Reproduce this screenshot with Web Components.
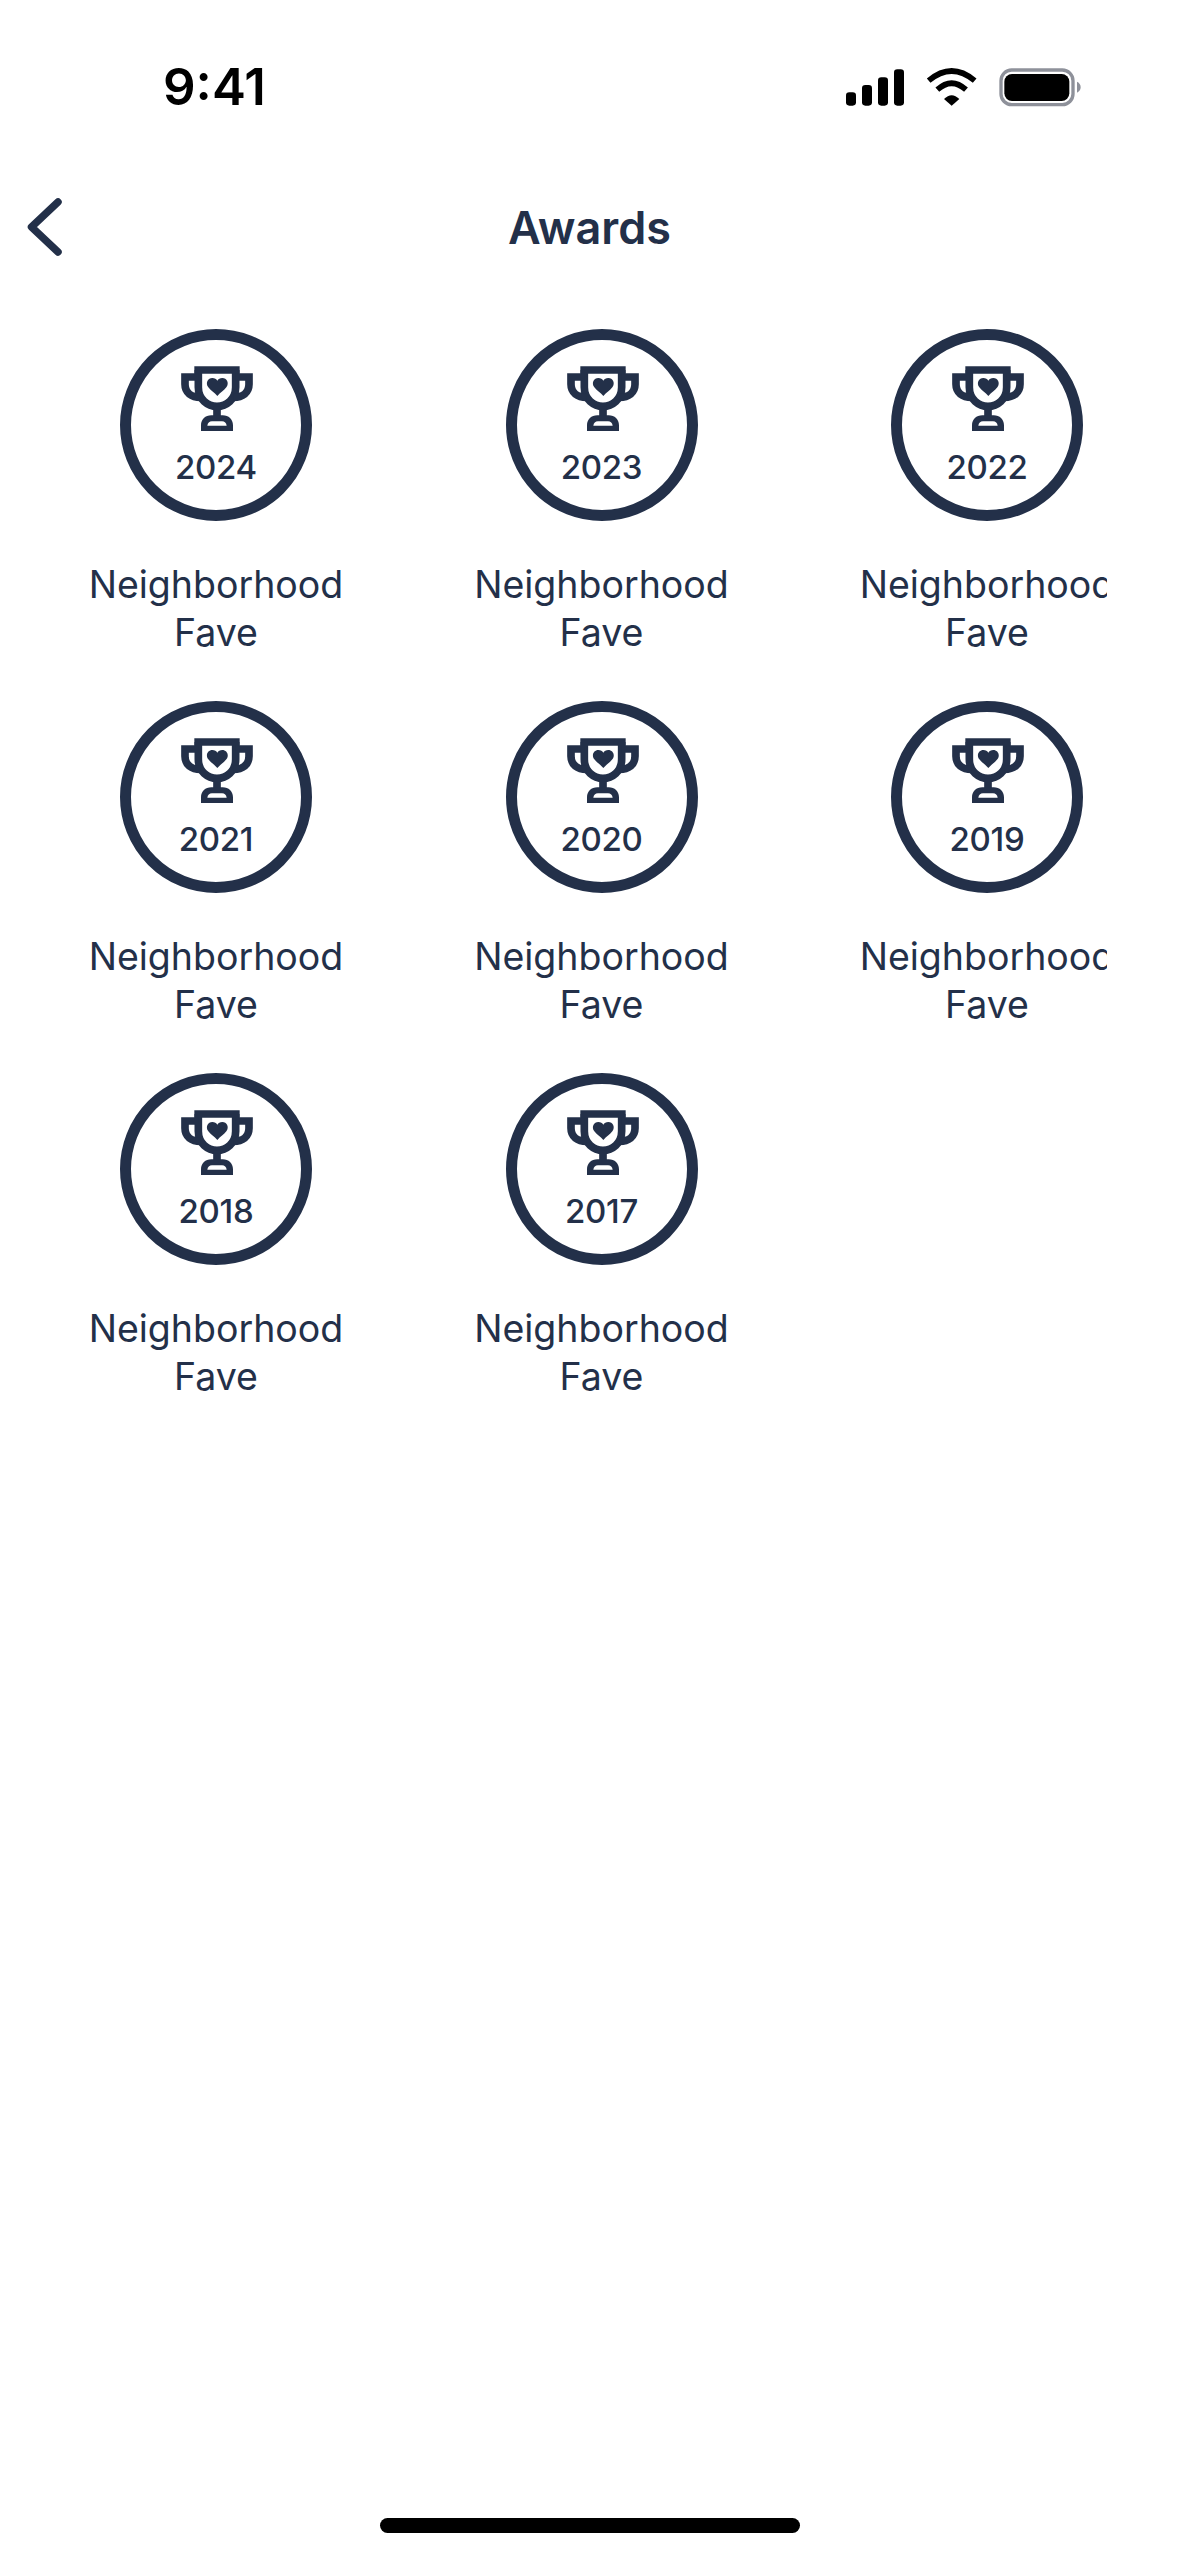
<!DOCTYPE html>
<html lang="en">
<head>
<meta charset="utf-8">
<title>Awards</title>
<style>
    html, body { margin: 0; padding: 0; background: #FFF; }
</style>
</head>
<body>
<awards-screen>
    <status-bar slot="status" time="9:41"></status-bar>
    <nav-header slot="nav" title="Awards"></nav-header>
    <award-grid>
        <award-badge year="2024">Neighborhood Fave</award-badge>
        <award-badge year="2023">Neighborhood Fave</award-badge>
        <award-badge year="2022">Neighborhood Fave</award-badge>
        <award-badge year="2021">Neighborhood Fave</award-badge>
        <award-badge year="2020">Neighborhood Fave</award-badge>
        <award-badge year="2019">Neighborhood Fave</award-badge>
        <award-badge year="2018">Neighborhood Fave</award-badge>
        <award-badge year="2017">Neighborhood Fave</award-badge>
    </award-grid>
</awards-screen>
<script>
window.customElements.define('awards-screen', class AWARDS_SCREEN extends HTMLElement {
    constructor() {
        super();
        this.attachShadow({mode: 'open'}).innerHTML = `
            <style>
                :host {
                    display: flex;
                    flex-direction: column;
                    width: 1179px;
                    height: 2556px;
                    background: #FFF;
                    color: #233049;
                    font-family: Inter, "Liberation Sans", sans-serif;
                    overflow: hidden;
                }
                main { flex: 1; padding: 0 72px; }
                .home { display: flex; justify-content: center; padding-bottom: 23px; }
                .home div { width: 420px; height: 15px; border-radius: 8px; background: #000; }
            </style>
            <slot name="status"></slot>
            <slot name="nav"></slot>
            <main><slot></slot></main>
            <div class="home"><div></div></div>
        `;
    }
});

window.customElements.define('status-bar', class STATUS_BAR extends HTMLElement {
    constructor() {
        super();
        this.attachShadow({mode: 'open'}).innerHTML = `
            <style>
                :host { display: flex; justify-content: space-between; align-items: center; height: 174px; box-sizing: border-box; padding: 0 79px 0 163px; }
                span { font: 600 51px/62px Inter, sans-serif; color: #000; }
                svg { display: block; width: 280px; height: 80px; margin-top: 6px; }
            </style>
            <span>${this.getAttribute('time')}</span>
            <svg viewBox="0 0 840 240">
                <g fill="#000">
                    <rect x="78" y="127" width="30" height="40" rx="10"/>
                    <rect x="126" y="105" width="30" height="62" rx="10"/>
                    <rect x="174" y="82" width="30" height="85" rx="10"/>
                    <rect x="222" y="58" width="30" height="109" rx="10"/>
                    <path d="M372 147Q395 124 418 147L395 167Z"/>
                </g>
                <g fill="none" stroke="#000" stroke-width="17">
                    <path d="M352 119Q395 80 438 119"/>
                    <path d="M326 92Q395 34 464 92"/>
                </g>
                <rect x="543" y="60" width="216" height="104" rx="32" fill="none" stroke="#8E919A" stroke-width="10"/>
                <rect x="553" y="72" width="195" height="81" rx="23" fill="#000"/>
                <path d="M771 95C779 99 782 105 782 111C782 118 779 124 771 128Z" fill="#8E919A"/>
            </svg>
        `;
    }
});

window.customElements.define('nav-header', class NAV_HEADER extends HTMLElement {
    constructor() {
        super();
        this.attachShadow({mode: 'open'}).innerHTML = `
            <style>
                :host { display: block; position: relative; height: 155px; }
                h1 { margin: 0; text-align: center; font: 600 45px/108px Inter, sans-serif; }
                svg { position: absolute; left: 24px; top: 22px; width: 44px; height: 64px; }
            </style>
            <svg viewBox="0 0 44 64" fill="none" stroke="currentColor" stroke-width="7.5" stroke-linecap="round" stroke-linejoin="round">
                <path d="M34 6L7.5 31L34 56"/>
            </svg>
            <h1>${this.getAttribute('title')}</h1>
        `;
    }
});

window.customElements.define('award-grid', class AWARD_GRID extends HTMLElement {
    constructor() {
        super();
        this.attachShadow({mode: 'open'}).innerHTML = `
            <style>
                :host {
                    display: grid;
                    grid-template-columns: repeat(3, 288px);
                    column-gap: 97.5px;
                    row-gap: 36px;
                    overflow: hidden;
                }
            </style>
            <slot></slot>
        `;
    }
});

window.customElements.define('award-badge', class AWARD_BADGE extends HTMLElement {
    constructor() {
        super();
        this.attachShadow({mode: 'open'}).innerHTML = `
            <style>
                :host { display: flex; flex-direction: column; align-items: center; height: 336px; }
                .ring {
                    width: 192px;
                    height: 192px;
                    box-sizing: border-box;
                    border: 11px solid currentColor;
                    border-radius: 50%;
                    display: flex;
                    flex-direction: column;
                    align-items: center;
                    padding-top: 20px;
                }
                svg { display: block; width: 100px; height: 90px; margin-top: -10px; }
                .year { font: 500 33px/40px Inter, sans-serif; letter-spacing: -0.3px; margin-top: 7px; }
                .label { width: 288px; margin-top: 40px; text-align: center; font: 400 37.5px/48px Inter, sans-serif; }
            </style>
            <div class="ring">
                <svg viewBox="0 0 300 270" fill="none" stroke="currentColor" stroke-width="23">
                    <path d="M85 60H221"/>
                    <path d="M97 60V112C97 148 125 169 153 169C181 169 209 148 209 112V60"/>
                    <path d="M153 169V205"/>
                    <path d="M97 81H57V103C57 128 76 142 104 142"/>
                    <path d="M209 81H249V103C249 128 230 142 202 142"/>
                    <path stroke="none" fill="currentColor" fill-rule="evenodd" d="M105 243V226C105 208 118 196 136 196H170C188 196 201 208 201 226V243ZM124 227H182C181 219 176 214 168 214H138C130 214 125 219 124 227Z"/>
                    <path stroke="none" fill="currentColor" d="M154 138C145 128 134 121 127 112C117 99 126 84 139 84C146 84 151 87 154 92C157 87 162 84 169 84C182 84 191 99 181 112C174 121 163 128 154 138Z"/>
                </svg>
                <div class="year">${this.getAttribute('year')}</div>
            </div>
            <div class="label"><slot></slot></div>
        `;
    }
});
</script>
</body>
</html>
